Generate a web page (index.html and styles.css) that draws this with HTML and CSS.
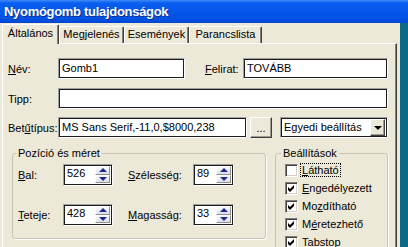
FILE: index.html
```html
<!DOCTYPE html>
<html lang="hu">
  <head>
    <meta charset="UTF-8" />
    <title>Nyomógomb tulajdonságok</title>
    <link rel="stylesheet" href="styles.css">
  </head>
  <body>
    <div class="titlebar">Nyomógomb tulajdonságok</div>
    <div class="screen">
      <div class="dialog">
        <div class="tabs">
          <div class="tab active">Általános</div>
          <div class="tab t2">Megjelenés</div>
          <div class="tab t3">Események</div>
          <div class="tab t4">Parancslista</div>
        </div>
        <div class="panel">
          <div class="row">
            <span class="lbl"><u>N</u>év:</span>
            <div class="field nameField">Gomb1</div>
            <span class="lbl captionLbl"><u>F</u>elirat:</span>
            <div class="field captionField">TOVÁBB</div>
          </div>
          <div class="row">
            <span class="lbl">Tipp:</span>
            <div class="field tipField"></div>
          </div>
          <div class="row">
            <span class="lbl">Bet<u>ű</u>típus:</span>
            <div class="field fontField">MS Sans Serif,-11,0,$8000,238</div>
            <div class="btn dots">...</div>
            <div class="field combo">
              <span>Egyedi beállítás</span>
              <div class="btn drop"><span class="tri"></span></div>
            </div>
          </div>
          <div class="groups">
            <fieldset class="group posGroup">
              <legend>Pozíció és méret</legend>
              <div class="spinRow">
                <span class="slbl"><u>B</u>al:</span>
                <div class="field spin">
                  <span>526</span>
                  <div class="spinBtns">
                    <div class="sbtn"><span class="up"></span></div>
                    <div class="sbtn"><span class="down"></span></div>
                  </div>
                </div>
                <span class="slbl wide"><u>S</u>zélesség:</span>
                <div class="field spin small">
                  <span>89</span>
                  <div class="spinBtns">
                    <div class="sbtn"><span class="up"></span></div>
                    <div class="sbtn"><span class="down"></span></div>
                  </div>
                </div>
              </div>
              <div class="spinRow">
                <span class="slbl"><u>T</u>eteje:</span>
                <div class="field spin">
                  <span>428</span>
                  <div class="spinBtns">
                    <div class="sbtn"><span class="up"></span></div>
                    <div class="sbtn"><span class="down"></span></div>
                  </div>
                </div>
                <span class="slbl wide"><u>M</u>agasság:</span>
                <div class="field spin small">
                  <span>33</span>
                  <div class="spinBtns">
                    <div class="sbtn"><span class="up"></span></div>
                    <div class="sbtn"><span class="down"></span></div>
                  </div>
                </div>
              </div>
            </fieldset>
            <fieldset class="group optGroup">
              <legend>Beállítások</legend>
              <div class="check">
                <span class="box"></span>
                <span class="focus"><u>L</u>átható</span>
              </div>
              <div class="check">
                <span class="box"><svg width="11" height="11" viewBox="0 0 11 11"><polygon points="2,4 4,6 8,2 8,5 4,9 2,7" fill="#000"/></svg></span>
                <span><u>E</u>ngedélyezett</span>
              </div>
              <div class="check">
                <span class="box"><svg width="11" height="11" viewBox="0 0 11 11"><polygon points="2,4 4,6 8,2 8,5 4,9 2,7" fill="#000"/></svg></span>
                <span>Mo<u>z</u>dítható</span>
              </div>
              <div class="check">
                <span class="box"><svg width="11" height="11" viewBox="0 0 11 11"><polygon points="2,4 4,6 8,2 8,5 4,9 2,7" fill="#000"/></svg></span>
                <span>M<u>é</u>retezhető</span>
              </div>
              <div class="check">
                <span class="box"><svg width="11" height="11" viewBox="0 0 11 11"><polygon points="2,4 4,6 8,2 8,5 4,9 2,7" fill="#000"/></svg></span>
                <span>T<u>a</u>bstop</span>
              </div>
            </fieldset>
          </div>
        </div>
      </div>
    </div>
  </body>
</html>
```

FILE: styles.css
```css
* {
  box-sizing: border-box;
}

body {
  margin: 0;
  width: 408px;
  height: 247px;
  overflow: hidden;
  background-color: #0b6a86;
  font-family: "Liberation Sans", Arial, sans-serif;
  font-size: 11px;
  color: #000;
}

.titlebar {
  height: 23px;
  padding-left: 4px;
  background: linear-gradient(#3d8af7 0, #0a5ef0 3px, #0457ea 50%, #0250e2 85%, #0146d0 100%);
  color: #fff;
  font-weight: bold;
  font-size: 13px;
  letter-spacing: -0.3px;
  line-height: 23px;
  text-shadow: 1px 1px #0b2f8c;
}

.screen {
  display: flex;
}
.dialog {
  width: 400px;
  height: 224px;
  padding: 1px 0 0 2px;
  background-color: #ece9d8;
  display: flex;
  flex-direction: column;
}

/* tabs */
.tabs {
  display: flex;
  align-items: flex-end;
  height: 19px;
}
.tab {
  height: 17px;
  line-height: 15px;
  text-align: center;
  border-top: 1px solid #fff;
  border-left: 1px solid #fff;
  border-right: 1px solid #404040;
  border-radius: 2px 2px 0 0;
  box-shadow: inset -1px 0 #808080;
}
.tab.active {
  width: 57px;
  height: 20px;
  line-height: 17px;
  margin-bottom: -1px;
  background-color: #ece9d8;
  position: relative;
  z-index: 1;
}
.t2 { width: 65px; }
.t3 { width: 65px; }
.t4 { width: 73px; }

.panel {
  flex: 1;
  width: 395px;
  padding: 14px 8px 0 5px;
  border-top: 1px solid #fff;
  border-left: 1px solid #fff;
  border-right: 1px solid #404040;
  box-shadow: inset -1px 0 #808080;
}

/* form rows */
.row {
  display: flex;
  align-items: center;
  height: 21px;
  margin-bottom: 9px;
}
.row:nth-child(2) {
  margin-bottom: 8px;
}
.lbl {
  width: 50px;
}
.captionLbl {
  width: 38px;
  margin-left: 20px;
}

.field {
  height: 21px;
  padding: 2px 3px;
  line-height: 14px;
  background-color: #fff;
  border: 1px solid;
  border-color: #a0a0a0 #fff #fff #a0a0a0;
  box-shadow: inset 0 0 0 1px #1c1c1c;
  white-space: nowrap;
  overflow: hidden;
}
.nameField { width: 127px; }
.captionField { width: 145px; }
.tipField { width: 330px; }
.fontField { width: 189px; }

.btn {
  background-color: #ece9d8;
  border: 1px solid;
  border-color: #fff #404040 #404040 #fff;
  box-shadow: inset -1px -1px #9d9b8f;
}
.dots {
  width: 22px;
  height: 21px;
  margin-left: 3px;
  text-align: center;
  line-height: 20px;
}
.combo {
  width: 108px;
  margin-left: 8px;
  display: flex;
  justify-content: space-between;
  padding: 2px 2px 2px 3px;
}
.drop {
  width: 15px;
  height: 17px;
  margin-top: -1px;
  display: flex;
  align-items: center;
  justify-content: center;
}
.tri {
  border-left: 4px solid transparent;
  border-right: 4px solid transparent;
  border-top: 4px solid #000;
}

/* group boxes */
.groups {
  display: flex;
  gap: 9px;
  margin-left: 4px;
}
.group {
  margin: 0;
  border: 1px solid #c8c5b2;
  border-radius: 3px;
  box-shadow: 1px 1px 0 #fff;
}
.group legend {
  padding: 0 2px;
  line-height: 13px;
}
.posGroup {
  width: 254px;
  height: 92px;
  padding: 4px 5px 0 5px;
}
.posGroup legend {
  margin-left: -2px;
}
.optGroup {
  width: 113px;
  height: 120px;
  padding: 1px 5px 0 9px;
}
.optGroup legend {
  margin-left: -4px;
}

.spinRow {
  display: flex;
  align-items: center;
  height: 22px;
  margin-bottom: 18px;
}
.slbl {
  width: 45px;
}
.slbl.wide {
  width: 65px;
  margin-left: 15px;
}
.spin {
  width: 50px;
  height: 22px;
  display: flex;
  justify-content: space-between;
  padding: 1px 2px 2px 3px;
}
.spin.small {
  width: 41px;
}
.spinBtns {
  display: flex;
  flex-direction: column;
  width: 15px;
}
.sbtn {
  height: 9px;
  display: flex;
  align-items: center;
  justify-content: center;
  background: linear-gradient(#fafaf7, #dcdff0);
  border: 1px solid;
  border-color: #fff #8f8f8f #8f8f8f #fff;
}
.up {
  border-left: 4px solid transparent;
  border-right: 4px solid transparent;
  border-bottom: 4px solid #1c2a8c;
}
.down {
  border-left: 4px solid transparent;
  border-right: 4px solid transparent;
  border-top: 4px solid #1c2a8c;
}

/* checkboxes */
.check {
  display: flex;
  align-items: center;
  gap: 4px;
  height: 18px;
}
.box {
  width: 13px;
  height: 13px;
  background-color: #fff;
  border: 1px solid;
  border-color: #808080 #fff #fff #808080;
  box-shadow: inset 1px 1px #404040, inset -1px -1px #d4d0c8;
  display: flex;
  align-items: center;
  justify-content: center;
}
.box svg {
  display: block;
}
.focus {
  outline: 1px dotted #000;
  padding: 0 1px;
  margin-left: -1px;
}
```
